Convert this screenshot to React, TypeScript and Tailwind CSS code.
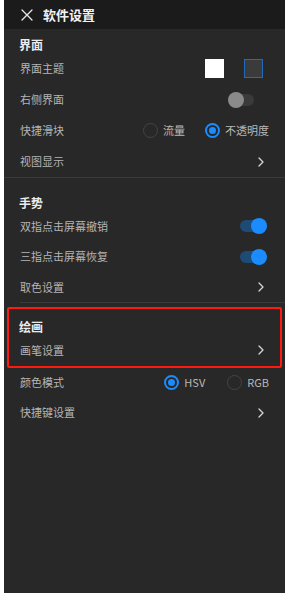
import type { ReactNode } from 'react';

const FONT = '[font-family:"Noto_Sans_CJK_SC","Noto_Sans",sans-serif]';

function Chevron() {
  return (
    <svg width="6" height="10" viewBox="0 0 6 10" fill="none" className="shrink-0">
      <path d="M1 1l4 4-4 4" stroke="#d6d6d6" strokeWidth="1.3" strokeLinecap="round" strokeLinejoin="round" />
    </svg>
  );
}

function Toggle({ on }: { on: boolean }) {
  return (
    <span className="relative block h-[16px] w-[32px] shrink-0">
      <span className={`absolute left-[5px] top-[2px] h-[12px] w-[21px] rounded-full ${on ? 'bg-[#1d4b76]' : 'bg-[#3a3a3a]'}`} />
      <span className={`absolute top-0 h-[16px] w-[16px] rounded-full ${on ? 'left-[16px] bg-[#1a8cff]' : 'left-0 bg-[#8a8a8a]'}`} />
    </span>
  );
}

function Radio({ checked, label }: { checked: boolean; label: string }) {
  return (
    <span className="flex items-center gap-[5px]">
      {checked ? (
        <span className="flex h-[15px] w-[15px] items-center justify-center rounded-full border-2 border-[#1a8cff]">
          <span className="h-[7px] w-[7px] rounded-full bg-[#1a8cff]" />
        </span>
      ) : (
        <span className="h-[15px] w-[15px] rounded-full border-[1.5px] border-[#444]" />
      )}
      <span className="text-[11px] text-[#b8b8b8]">{label}</span>
    </span>
  );
}

function Row({ label, h = 'h-[31px]', pr = 'pr-[21px]', pl = 'pl-[16px]', children }: { label: string; h?: string; pr?: string; pl?: string; children?: ReactNode }) {
  return (
    <div className={`flex items-center justify-between ${h} ${pl} ${pr}`}>
      <span className="text-[11px] text-[#b5b5b5]">{label}</span>
      {children}
    </div>
  );
}

function Heading({ children, pl = 'pl-[15px]' }: { children: ReactNode; pl?: string }) {
  return <div className={`flex h-[16px] items-center ${pl} text-[12px] font-bold text-[#ececec]`}>{children}</div>;
}

export default function App() {
  return (
    <div className={`h-[593px] w-[294px] bg-white ${FONT}`}>
      <div className="ml-[4px] h-[593px] w-[281px] bg-[#282828]">
        <div className="flex h-[29px] items-center bg-[#1b1b1b] pl-[17px]">
          <svg width="12" height="12" viewBox="0 0 12 12" fill="none">
            <path d="M1 1l10 10M11 1L1 11" stroke="#e8e8e8" strokeWidth="1.3" strokeLinecap="round" />
          </svg>
          <span className="ml-[10px] text-[13px] font-bold text-[#f2f2f2]">软件设置</span>
        </div>

        <div className="pt-[8px]">
          <Heading>界面</Heading>
          <Row label="界面主题" pr="pr-[22px]">
            <span className="flex items-center gap-[20px]">
              <span className="h-[19px] w-[19px] bg-white" />
              <span className="h-[19px] w-[19px] border border-[#1f6cbf] bg-[#3b3b3b]" />
            </span>
          </Row>
          <Row label="右侧界面" pr="pr-[18px]">
            <span className="mr-[7px]">
              <Toggle on={false} />
            </span>
          </Row>
          <Row label="快捷滑块" pr="pr-[16px]">
            <span className="flex items-center gap-[20px]">
              <Radio checked={false} label="流量" />
              <Radio checked label="不透明度" />
            </span>
          </Row>
          <Row label="视图显示">
            <Chevron />
          </Row>
        </div>
        <div className="h-px bg-[#3a3a3a]" />

        <div className="pt-[17px]">
          <Heading>手势</Heading>
          <Row label="双指点击屏幕撤销" h="h-[30px]" pr="pr-[18px]">
            <Toggle on />
          </Row>
          <Row label="三指点击屏幕恢复" pr="pr-[18px]">
            <Toggle on />
          </Row>
          <Row label="取色设置" h="h-[30px]">
            <Chevron />
          </Row>
        </div>
        <div className="ml-[16px] h-px bg-[#3a3a3a]" />

        <div className="mx-[3px] mt-[4px] rounded-[2px] border-2 border-[#ff1a0f] pb-[1px] pt-[10px]">
          <Heading pl="pl-[10px]">绘画</Heading>
          <Row label="画笔设置" h="h-[30px]" pl="pl-[11px]" pr="pr-[16px]">
            <Chevron />
          </Row>
        </div>
        <Row label="颜色模式" h="h-[29px]" pr="pr-[16px]">
          <span className="flex items-center gap-[22px]">
            <Radio checked label="HSV" />
            <Radio checked={false} label="RGB" />
          </span>
        </Row>
        <Row label="快捷键设置">
          <Chevron />
        </Row>
      </div>
    </div>
  );
}
